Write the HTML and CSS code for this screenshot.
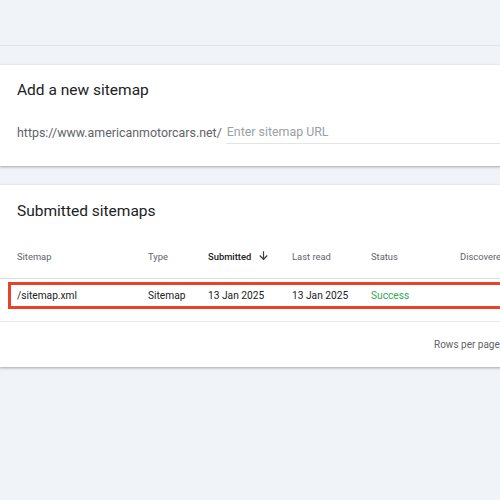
FILE: index.html
```html
<!DOCTYPE html>
<html>
<head>
<meta charset="utf-8">
<link rel="stylesheet" href="styles.css">
</head>
<body>
<div class="topbar"></div>
<section class="card add-card">
  <h2 class="card-title">Add a new sitemap</h2>
  <div class="url-row">
    <span class="prefix">https://www.americanmotorcars.net/</span>
    <div class="input">Enter sitemap URL</div>
  </div>
</section>
<section class="card list-card">
  <h2 class="card-title">Submitted sitemaps</h2>
  <div class="table">
    <div class="row head">
      <div class="c c1">Sitemap</div>
      <div class="c c2">Type</div>
      <div class="c c3 sorted">Submitted <svg class="arrow" viewBox="0 0 24 24" width="13" height="13"><path d="M12 4v15M5 12l7 7 7-7" fill="none" stroke="#3c4043" stroke-width="2.2"/></svg></div>
      <div class="c c4">Last read</div>
      <div class="c c5">Status</div>
      <div class="c c6">Discovered pages</div>
    </div>
    <div class="row body">
      <div class="c c1">/sitemap.xml</div>
      <div class="c c2">Sitemap</div>
      <div class="c c3">13 Jan 2025</div>
      <div class="c c4">13 Jan 2025</div>
      <div class="c c5 ok">Success</div>
      <div class="c c6"></div>
      <div class="highlight"></div>
    </div>
  </div>
  <div class="footer">Rows per page</div>
</section>
</body>
</html>
```
FILE: styles.css
```css
html, body { margin: 0; padding: 0; }
body {
  background: #f0f3f8;
  font-family: Roboto, "Liberation Sans", sans-serif;
  color: #202124;
  width: 500px;
  height: 500px;
  overflow: hidden;
}
.topbar {
  height: 45px;
  border-bottom: 1px solid #e1e4ea;
}
.card {
  background: #fff;
  box-shadow: 0 1px 2px rgba(60,64,67,.3), 0 1px 3px 1px rgba(60,64,67,.1);
  width: 520px;
}
.add-card {
  margin-top: 19px;
  height: 101px;
  padding: 0 0 0 17px;
  box-sizing: border-box;
  display: flex;
  flex-direction: column;
}
.card-title {
  margin: 0;
  font-size: 15.5px;
  font-weight: 400;
  line-height: 24px;
  color: #202124;
}
.add-card .card-title { padding-top: 13px; }
.url-row {
  display: flex;
  align-items: flex-end;
  margin-top: 21px;
  font-size: 12.4px;
}
.prefix { color: #5f6368; line-height: 18px; padding-bottom: 2px; }
.input {
  margin-left: 4px;
  flex: 1;
  color: #9aa0a6;
  line-height: 18px;
  padding-left: 1px;
  padding-bottom: 2px;
  border-bottom: 1px solid #e3e5e8;
}
.list-card {
  margin-top: 19px;
  height: 182px;
}
.list-card .card-title { padding: 14px 0 0 17px; }
.table { margin-top: 11px; }
.row {
  display: flex;
  align-items: center;
  position: relative;
}
.row.head {
  height: 45px;
  font-size: 9.4px;
  color: #5f6368;
  border-bottom: 1px solid #dadce0;
  box-sizing: border-box;
}
.row.body {
  height: 43px;
  font-size: 10.2px;
  color: #202124;
  border-bottom: 1px solid #e8eaed;
  box-sizing: border-box;
  padding-bottom: 9px;
}
.c { white-space: nowrap; flex-shrink: 0; }
.c1 { width: 131px; padding-left: 17px; }
.c2 { width: 60px; }
.c3 { width: 84px; display: flex; align-items: center; gap: 6px; }
.c4 { width: 79px; }
.c5 { width: 89px; }
.sorted { color: #202124; font-weight: 500; }
.arrow { display: block; margin-top: -2px; }
.ok { color: #34a853; }
.highlight {
  position: absolute;
  left: 8px;
  top: 3px;
  width: 520px;
  height: 27px;
  border: 3px solid #e8412c;
  box-sizing: border-box;
  pointer-events: none;
}
.footer {
  font-size: 10px;
  line-height: 12px;
  color: #5f6368;
  padding: 17px 0 0 434px;
  white-space: nowrap;
}
```
